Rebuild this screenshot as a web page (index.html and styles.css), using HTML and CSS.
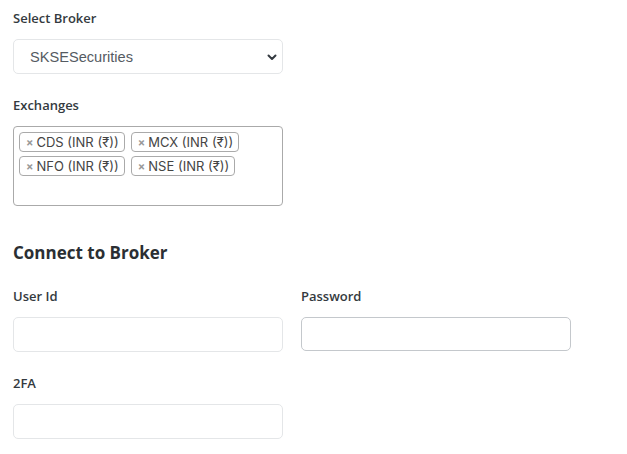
FILE: index.html
```html
<!DOCTYPE html>
<html lang="en">
<head>
<meta charset="UTF-8">
<meta name="viewport" content="width=device-width, initial-scale=1.0">
<title>Broker Settings</title>
<link rel="stylesheet" href="styles.css">
</head>
<body>

<div class="page">
    <div class="field">
        <label for="broker">Select Broker</label>
        <div class="select-wrap">
            <select id="broker" class="control select">
                <option>SKSESecurities</option>
            </select>
            <svg class="chevron" width="10" height="7" viewBox="0 0 10 7">
                <path d="M1.5 1.5 L5 5 L8.5 1.5" fill="none" stroke="#343a40" stroke-width="2" stroke-linecap="round" stroke-linejoin="round"/>
            </svg>
        </div>
    </div>

    <div class="field">
        <label>Exchanges</label>
        <div class="tag-box">
            <span class="tag"><span class="tag-x">&times;</span>CDS (INR (₹))</span>
            <span class="tag"><span class="tag-x">&times;</span>MCX (INR (₹))</span>
            <span class="tag"><span class="tag-x">&times;</span>NFO (INR (₹))</span>
            <span class="tag"><span class="tag-x">&times;</span>NSE (INR (₹))</span>
        </div>
    </div>

    <h2>Connect to Broker</h2>

    <div class="grid">
        <div class="field">
            <label for="userid">User Id</label>
            <input type="text" id="userid" class="control">
        </div>
        <div class="field">
            <label for="password">Password</label>
            <input type="password" id="password" class="control dark">
        </div>
        <div class="field">
            <label for="twofa">2FA</label>
            <input type="text" id="twofa" class="control">
        </div>
    </div>
</div>

</body>
</html>
```

FILE: styles.css
```css
body, html {
    margin: 0;
    padding: 0;
    background: #fff;
}

.page {
    padding: 8px 13px;
    width: 558px;
    font-family: "Open Sans", "Noto Sans", sans-serif;
    color: #343a40;
}

.field {
    width: 270px;
    margin-bottom: 21px;
}

label {
    display: block;
    font-size: 13px;
    font-weight: 600;
    line-height: 20px;
    margin-bottom: 11px;
    color: #343a40;
}

.control {
    display: block;
    box-sizing: border-box;
    width: 270px;
    height: 35px;
    border: 1px solid #e4e6e8;
    border-radius: 5px;
    background: #fff;
    padding: 0 16px;
    font-size: 15px;
    outline: none;
}

.control.dark {
    border-color: #c4c8cc;
    height: 34px;
}

.select-wrap {
    position: relative;
    width: 270px;
}

.select {
    appearance: none;
    -webkit-appearance: none;
    font-family: "Liberation Sans", Arial, sans-serif;
    font-size: 14.6px;
    color: #555b62;
}

.chevron {
    position: absolute;
    right: 6px;
    top: 15px;
}

.tag-box {
    box-sizing: border-box;
    width: 270px;
    height: 80px;
    border: 1px solid #aaa;
    border-radius: 4px;
    padding: 5px 5px;
    display: flex;
    flex-wrap: wrap;
    align-content: flex-start;
    gap: 4px 6px;
}

.tag {
    display: inline-flex;
    align-items: center;
    height: 20px;
    box-sizing: border-box;
    border: 1px solid #aaa;
    border-radius: 4px;
    padding: 0 5px 0 6px;
    font-family: Inter, "Noto Sans", sans-serif;
    font-size: 13px;
    color: #444;
    background: #fff;
}

.tag-x {
    color: #999;
    font-weight: 700;
    font-size: 11px;
    margin-right: 3px;
}

h2 {
    font-size: 17px;
    font-weight: 700;
    line-height: 24px;
    margin: 35px 0 21px;
    color: #2b2f33;
}

.grid {
    display: grid;
    grid-template-columns: 270px 270px;
    column-gap: 18px;
}
```
